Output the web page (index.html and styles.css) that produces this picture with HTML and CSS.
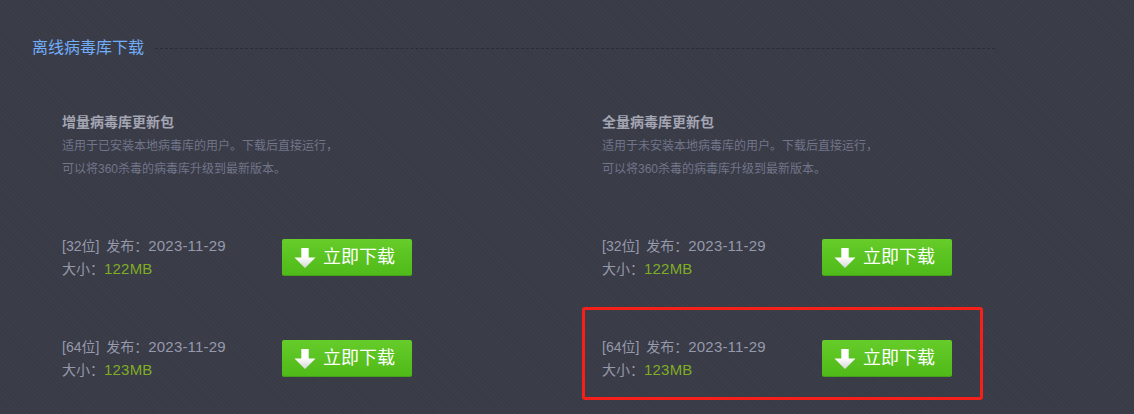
FILE: index.html
```html
<!DOCTYPE html>
<html lang="zh-CN">
<head>
    <meta charset="UTF-8">
    <title>离线病毒库下载</title>
    <link rel="stylesheet" href="styles.css">
</head>
<body>

    <div class="section-title">
        <h2>离线病毒库下载</h2>
        <span class="title-line"></span>
    </div>

    <div class="packages">
        <!-- Incremental -->
        <div class="package">
            <h3>增量病毒库更新包</h3>
            <p class="desc">适用于已安装本地病毒库的用户。下载后直接运行<span class="punct">，</span><br>可以将360杀毒的病毒库升级到最新版本。</p>

            <div class="release">
                <div class="info">
                    <p>[32位] 发布<span class="punct">：</span><span class="num">2023-11-29</span></p>
                    <p>大小<span class="punct">：</span><span class="num size">122MB</span></p>
                </div>
                <a class="download-btn" href="#">
                    <svg viewBox="0 0 20 20" width="20" height="20"><defs><linearGradient id="arrow-fill" x1="0" y1="0" x2="0" y2="1"><stop offset="0.45" stop-color="#ffffff"/><stop offset="1" stop-color="#d6d6d6"/></linearGradient></defs><path d="M6.3 0H13.7V9.5H20.5L10 20L-0.5 9.5H6.3Z" fill="url(#arrow-fill)"/></svg>
                    立即下载
                </a>
            </div>

            <div class="release">
                <div class="info">
                    <p>[64位] 发布<span class="punct">：</span><span class="num">2023-11-29</span></p>
                    <p>大小<span class="punct">：</span><span class="num size">123MB</span></p>
                </div>
                <a class="download-btn" href="#">
                    <svg viewBox="0 0 20 20" width="20" height="20"><path d="M6.3 0H13.7V9.5H20.5L10 20L-0.5 9.5H6.3Z" fill="url(#arrow-fill)"/></svg>
                    立即下载
                </a>
            </div>
        </div>

        <!-- Full -->
        <div class="package">
            <h3>全量病毒库更新包</h3>
            <p class="desc">适用于未安装本地病毒库的用户。下载后直接运行<span class="punct">，</span><br>可以将360杀毒的病毒库升级到最新版本。</p>

            <div class="release">
                <div class="info">
                    <p>[32位] 发布<span class="punct">：</span><span class="num">2023-11-29</span></p>
                    <p>大小<span class="punct">：</span><span class="num size">122MB</span></p>
                </div>
                <a class="download-btn" href="#">
                    <svg viewBox="0 0 20 20" width="20" height="20"><path d="M6.3 0H13.7V9.5H20.5L10 20L-0.5 9.5H6.3Z" fill="url(#arrow-fill)"/></svg>
                    立即下载
                </a>
            </div>

            <div class="release highlighted">
                <div class="info">
                    <p>[64位] 发布<span class="punct">：</span><span class="num">2023-11-29</span></p>
                    <p>大小<span class="punct">：</span><span class="num size">123MB</span></p>
                </div>
                <a class="download-btn" href="#">
                    <svg viewBox="0 0 20 20" width="20" height="20"><path d="M6.3 0H13.7V9.5H20.5L10 20L-0.5 9.5H6.3Z" fill="url(#arrow-fill)"/></svg>
                    立即下载
                </a>
            </div>
        </div>
    </div>

</body>
</html>
```

FILE: styles.css
```css
html, body {
    height: 100%;
}

body {
    margin: 0;
    padding: 37px 0 0 32px;
    box-sizing: border-box;
    overflow: hidden;
    background-color: #3b3d49;
    background-image: repeating-linear-gradient(45deg, rgba(0, 0, 0, 0.05) 0 1px, transparent 1px 3px);
    font-family: "Liberation Sans", "Noto Sans CJK SC", sans-serif;
    color: #9699ab;
}

p, h2, h3 {
    margin: 0;
    font-weight: normal;
}

/* Section title */
.section-title {
    display: flex;
    align-items: center;
    width: 963px;
    height: 22px;
}

.section-title h2 {
    font-size: 16px;
    line-height: 22px;
    color: #72adfa;
    white-space: nowrap;
}

.title-line {
    flex-grow: 1;
    margin-left: 11px;
    border-top: 1px dashed #2c2d37;
}

/* Packages */
.packages {
    display: flex;
    padding: 53px 0 0 30px;
}

.package {
    flex-shrink: 0;
    width: 540px;
}

.package h3 {
    font-size: 14px;
    line-height: 20px;
    font-weight: bold;
    color: #a3a5b2;
}

.desc {
    margin-top: 1px;
    font-size: 12px;
    line-height: 23px;
    color: #71758a;
}

.punct {
    font-family: "Noto Sans CJK TC", sans-serif;
}

/* Release rows */
.release {
    position: relative;
    display: flex;
    align-items: center;
    height: 46px;
    margin-top: 53px;
    font-size: 14px;
    line-height: 23px;
}

.release + .release {
    margin-top: 55px;
}

.info {
    width: 220px;
    word-spacing: 3px;
}

.info p {
    height: 23px;
}

.num {
    font-size: 15px;
    letter-spacing: 0.2px;
}

.size {
    color: #7fae24;
}

.download-btn {
    display: flex;
    align-items: center;
    gap: 8px;
    box-sizing: border-box;
    width: 130px;
    height: 37px;
    padding: 2px 0 0 13px;
    border-radius: 2px;
    border-bottom: 1px solid #46a01a;
    background: linear-gradient(#66cc2a, #4fba19);
    color: #ffffff;
    font-size: 18px;
    text-decoration: none;
}

.download-btn svg {
    overflow: visible;
}

/* Red annotation box drawn over the last row */
.highlighted::after {
    content: "";
    position: absolute;
    left: -20px;
    top: -28px;
    width: 395px;
    height: 87px;
    border: 3px solid #f5201a;
    border-radius: 3px;
}
```
